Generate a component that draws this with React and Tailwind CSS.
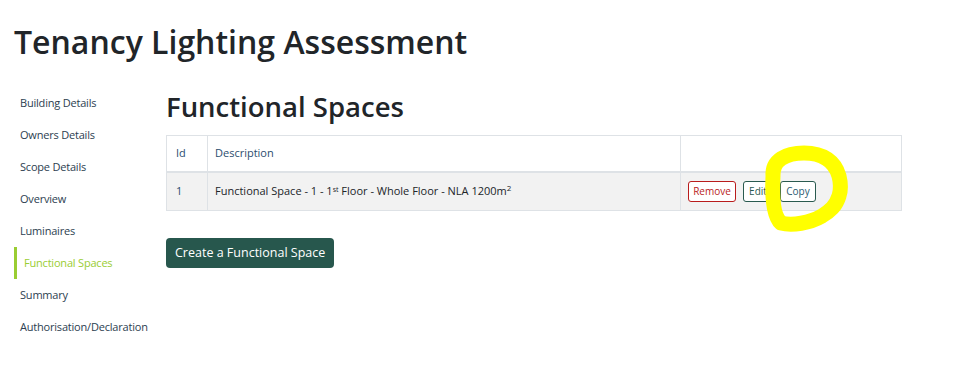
import React from "react"

const navItems = [
  "Building Details",
  "Owners Details",
  "Scope Details",
  "Overview",
  "Luminaires",
  "Functional Spaces",
  "Summary",
  "Authorisation/Declaration",
]

const font = { fontFamily: '"Open Sans", "Noto Sans", sans-serif' }

function Sidebar() {
  return (
    <nav className="w-[152px] shrink-0 flex flex-col">
      {navItems.map((item) => {
        const active = item === "Functional Spaces"
        return (
          <div
            key={item}
            className={
              active
                ? "h-[32px] flex items-center border-l-[3px] border-[#9acd32] pl-[7px] text-[11px] text-[#9acd32] tracking-[-0.2px]"
                : "h-[32px] flex items-center pl-[6px] text-[11px] text-[#2c3e50] tracking-[-0.2px]"
            }
          >
            {item}
          </div>
        )
      })}
    </nav>
  )
}

function Row() {
  return (
    <tr className="bg-[#f2f2f2] h-[39px]">
      <td className="border border-[#dee2e6] px-[9px] text-[#2b4d6e]">1</td>
      <td className="border border-[#dee2e6] px-[7px] text-[#212529]">
        Functional Space - 1 - 1<sup className="text-[7px]">st</sup> Floor - Whole Floor - NLA 1200m<sup className="text-[8px]">2</sup>
      </td>
      <td className="border border-[#dee2e6] px-[7px]">
        <div className="flex gap-[7px]">
          <button className="h-[21px] w-[48px] border border-[#b91c1c] rounded-[3px] text-[10px] text-[#b91c1c] bg-white">
            Remove
          </button>
          <button className="h-[21px] w-[30px] border border-[#2a5a4f] rounded-[3px] text-[10px] text-[#2a5a4f] bg-white">
            Edit
          </button>
          <button className="h-[21px] w-[36px] border border-[#2a5a4f] rounded-[3px] text-[10px] text-[#2a5a6f] bg-white">
            Copy
          </button>
        </div>
      </td>
    </tr>
  )
}

export default function App() {
  return (
    <div className="relative w-[967px] h-[377px] bg-white overflow-hidden" style={font}>
      <h1 className="pl-[14px] pt-[22px] text-[32px] leading-[40px] font-semibold text-[#212529]">
        Tenancy Lighting Assessment
      </h1>
      <div className="flex pl-[14px] pt-[25px]">
        <Sidebar />
        <main className="w-[736px]">
          <h2 className="mt-[3px] text-[27.5px] leading-[34px] font-semibold text-[#212529]">
            Functional Spaces
          </h2>
          <table className="mt-[11px] w-[736px] border-collapse text-[11px]">
            <thead>
              <tr className="h-[36px] border-b-2 border-[#dee2e6]">
                <th className="w-[41px] border border-[#dee2e6] px-[9px] text-left font-normal text-[#2b4d6e]">Id</th>
                <th className="w-[473px] border border-[#dee2e6] px-[7px] text-left font-normal text-[#2b4d6e]">Description</th>
                <th className="border border-[#dee2e6]"></th>
              </tr>
            </thead>
            <tbody>
              <Row />
            </tbody>
          </table>
          <button className="mt-[27px] h-[30px] px-[9px] bg-[#27574d] rounded-[4px] text-white text-[12.5px]">
            Create a Functional Space
          </button>
        </main>
      </div>
      <svg className="absolute left-0 top-0 pointer-events-none" width="967" height="377">
        <path
          d="M 773 176 C 772 160, 786 153, 804 153 C 824 153, 835 162, 839 176 C 841 184, 841 190, 839 196 C 836 206, 830 211, 822 216 C 810 223, 792 226, 781 223 C 773 216, 772 196, 773 176 Z"
          fill="none"
          stroke="#ffff00"
          strokeWidth="15"
          strokeLinecap="round"
          strokeLinejoin="round"
        />
      </svg>
    </div>
  )
}
